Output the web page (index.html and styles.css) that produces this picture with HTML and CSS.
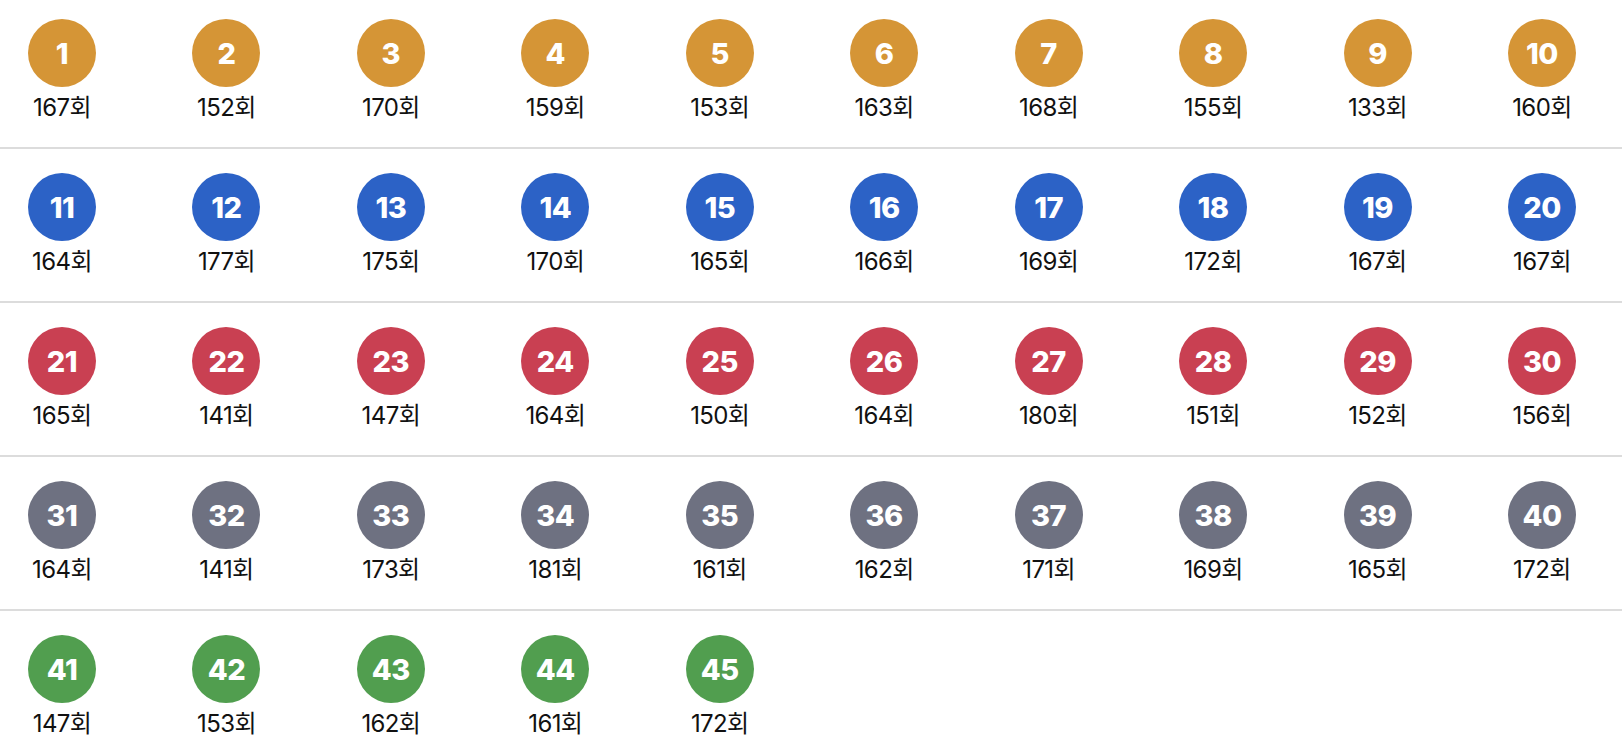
FILE: index.html
```html
<!DOCTYPE html>
<html lang="ko">
<head>
<meta charset="utf-8">
<title>번호별 출현 횟수</title>
<link rel="stylesheet" href="styles.css">
</head>
<body>
<div class="board">
  <div class="row">
    <div class="cell"><span class="ball gold">1</span><span class="count">167회</span></div>
    <div class="cell"><span class="ball gold">2</span><span class="count">152회</span></div>
    <div class="cell"><span class="ball gold">3</span><span class="count">170회</span></div>
    <div class="cell"><span class="ball gold">4</span><span class="count">159회</span></div>
    <div class="cell"><span class="ball gold">5</span><span class="count">153회</span></div>
    <div class="cell"><span class="ball gold">6</span><span class="count">163회</span></div>
    <div class="cell"><span class="ball gold">7</span><span class="count">168회</span></div>
    <div class="cell"><span class="ball gold">8</span><span class="count">155회</span></div>
    <div class="cell"><span class="ball gold">9</span><span class="count">133회</span></div>
    <div class="cell"><span class="ball gold">10</span><span class="count">160회</span></div>
  </div>
  <div class="row">
    <div class="cell"><span class="ball blue">11</span><span class="count">164회</span></div>
    <div class="cell"><span class="ball blue">12</span><span class="count">177회</span></div>
    <div class="cell"><span class="ball blue">13</span><span class="count">175회</span></div>
    <div class="cell"><span class="ball blue">14</span><span class="count">170회</span></div>
    <div class="cell"><span class="ball blue">15</span><span class="count">165회</span></div>
    <div class="cell"><span class="ball blue">16</span><span class="count">166회</span></div>
    <div class="cell"><span class="ball blue">17</span><span class="count">169회</span></div>
    <div class="cell"><span class="ball blue">18</span><span class="count">172회</span></div>
    <div class="cell"><span class="ball blue">19</span><span class="count">167회</span></div>
    <div class="cell"><span class="ball blue">20</span><span class="count">167회</span></div>
  </div>
  <div class="row">
    <div class="cell"><span class="ball red">21</span><span class="count">165회</span></div>
    <div class="cell"><span class="ball red">22</span><span class="count">141회</span></div>
    <div class="cell"><span class="ball red">23</span><span class="count">147회</span></div>
    <div class="cell"><span class="ball red">24</span><span class="count">164회</span></div>
    <div class="cell"><span class="ball red">25</span><span class="count">150회</span></div>
    <div class="cell"><span class="ball red">26</span><span class="count">164회</span></div>
    <div class="cell"><span class="ball red">27</span><span class="count">180회</span></div>
    <div class="cell"><span class="ball red">28</span><span class="count">151회</span></div>
    <div class="cell"><span class="ball red">29</span><span class="count">152회</span></div>
    <div class="cell"><span class="ball red">30</span><span class="count">156회</span></div>
  </div>
  <div class="row">
    <div class="cell"><span class="ball gray">31</span><span class="count">164회</span></div>
    <div class="cell"><span class="ball gray">32</span><span class="count">141회</span></div>
    <div class="cell"><span class="ball gray">33</span><span class="count">173회</span></div>
    <div class="cell"><span class="ball gray">34</span><span class="count">181회</span></div>
    <div class="cell"><span class="ball gray">35</span><span class="count">161회</span></div>
    <div class="cell"><span class="ball gray">36</span><span class="count">162회</span></div>
    <div class="cell"><span class="ball gray">37</span><span class="count">171회</span></div>
    <div class="cell"><span class="ball gray">38</span><span class="count">169회</span></div>
    <div class="cell"><span class="ball gray">39</span><span class="count">165회</span></div>
    <div class="cell"><span class="ball gray">40</span><span class="count">172회</span></div>
  </div>
  <div class="row">
    <div class="cell"><span class="ball green">41</span><span class="count">147회</span></div>
    <div class="cell"><span class="ball green">42</span><span class="count">153회</span></div>
    <div class="cell"><span class="ball green">43</span><span class="count">162회</span></div>
    <div class="cell"><span class="ball green">44</span><span class="count">161회</span></div>
    <div class="cell"><span class="ball green">45</span><span class="count">172회</span></div>
  </div>
</div>
</body>
</html>
```
FILE: styles.css
```css
html, body {
  margin: 0;
  padding: 0;
  background: #ffffff;
}

body {
  font-family: "Inter", "Noto Sans CJK KR", sans-serif;
  color: #111111;
  overflow: hidden;
}

.board {
  display: flex;
  flex-direction: column;
}

.row {
  display: grid;
  grid-template-columns: repeat(10, 124px);
  column-gap: 40.44px;
  padding: 24px 0 25px;
  border-top: 2px solid #dcdcdc;
}

.row:first-child {
  padding-top: 19px;
  border-top: none;
}

.cell {
  display: flex;
  flex-direction: column;
  align-items: center;
}

.ball {
  width: 68px;
  height: 68px;
  border-radius: 50%;
  display: flex;
  align-items: center;
  justify-content: center;
  color: #ffffff;
  font-family: "Inter", "Roboto", sans-serif;
  font-weight: 800;
  font-size: 29px;
  line-height: 1;
  letter-spacing: -0.5px;
}

.gold { background: #d59536; }
.blue { background: #2c62c6; }
.red { background: #c94052; }
.gray { background: #6e7181; }
.green { background: #519e4f; }

.count {
  margin-top: 7px;
  font-family: "Inter", "Noto Sans CJK KR", sans-serif;
  font-size: 24px;
  line-height: 28px;
  letter-spacing: -0.6px;
  color: #111111;
}
```
